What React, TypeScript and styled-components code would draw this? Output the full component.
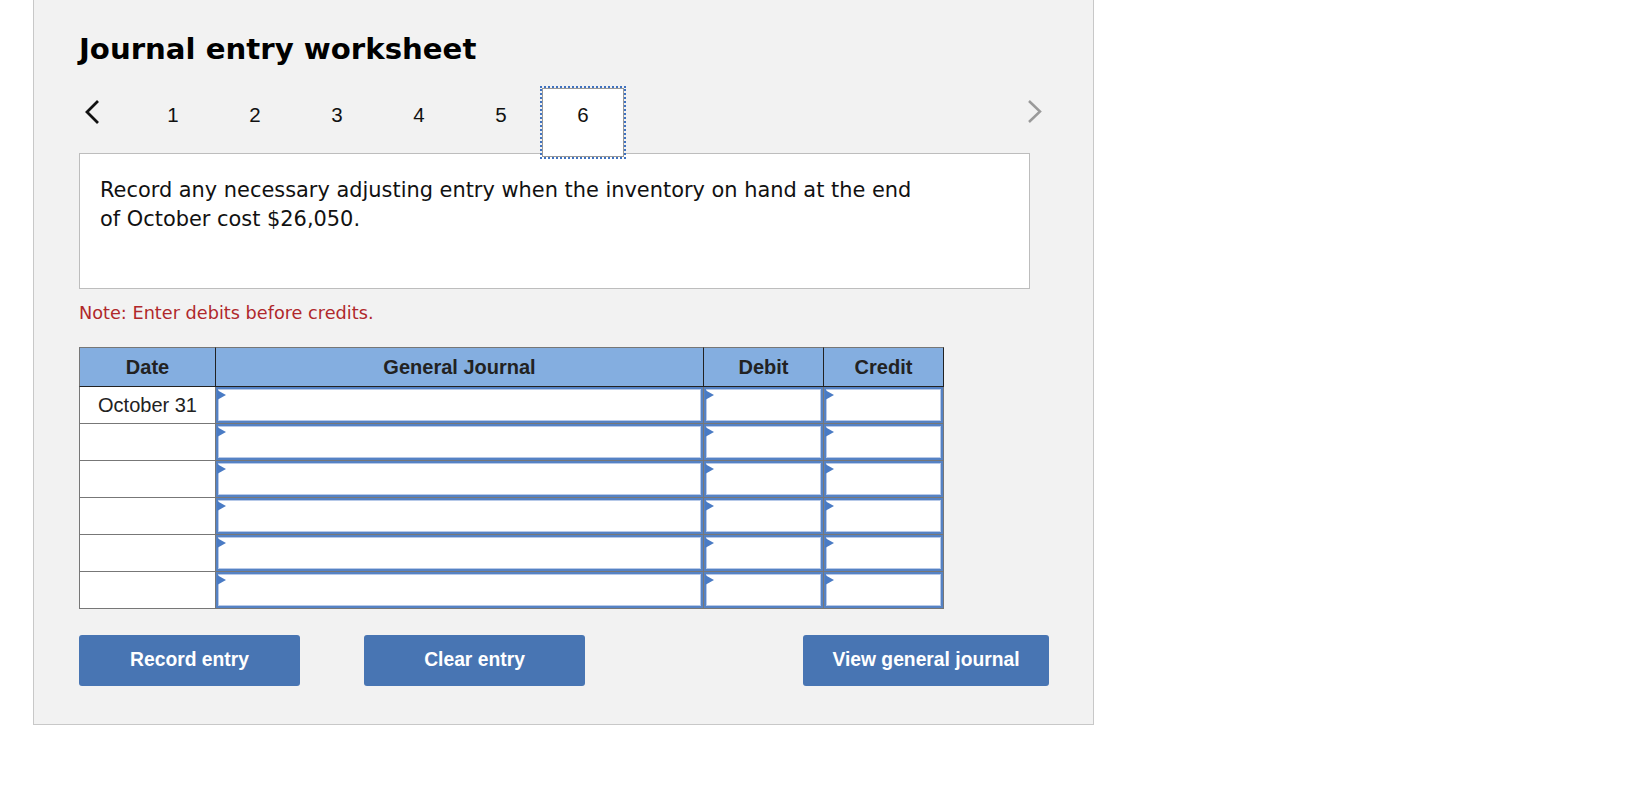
import * as React from "react";
import styled, { createGlobalStyle } from "styled-components";

const GlobalStyle = createGlobalStyle`
  html, body {
    margin: 0;
    padding: 0;
    background: #ffffff;
  }
`;

const TABS = [1, 2, 3, 4, 5, 6];
const ACTIVE_TAB = 6;
const ROWS = ["October 31", "", "", "", "", ""];

function Chevron({ dir }: { dir: "prev" | "next" }) {
  return (
    <svg width="16" height="26" viewBox="0 0 16 26" aria-hidden="true">
      {dir === "prev" ? (
        <polyline points="14,2 3,13 14,24" fill="none" stroke="#111" strokeWidth="2.8" />
      ) : (
        <polyline points="2,2 13,12.5 2,23" fill="none" stroke="#9a9a9a" strokeWidth="2.5" />
      )}
    </svg>
  );
}

export default function App() {
  return (
    <>
      <GlobalStyle />
      <Panel>
        <Title>Journal entry worksheet</Title>

        <NavRow>
          <NavArrow type="button" aria-label="Previous">
            <Chevron dir="prev" />
          </NavArrow>
          {TABS.map((n) => (
            <Tab key={n} $active={n === ACTIVE_TAB}>
              {n}
            </Tab>
          ))}
          <NextArrow type="button" aria-label="Next">
            <Chevron dir="next" />
          </NextArrow>
        </NavRow>

        <Prompt>
          <PromptText>
            Record any necessary adjusting entry when the inventory on hand at the end of
            October cost $26,050.
          </PromptText>
        </Prompt>

        <Note>Note: Enter debits before credits.</Note>

        <Journal>
          <HeadCell $first>Date</HeadCell>
          <HeadCell>General Journal</HeadCell>
          <HeadCell>Debit</HeadCell>
          <HeadCell>Credit</HeadCell>
          {ROWS.map((date, i) => (
            <React.Fragment key={i}>
              <DateCell>{date}</DateCell>
              <EntryCell>
                <EntryInput />
              </EntryCell>
              <EntryCell>
                <EntryInput />
              </EntryCell>
              <EntryCell>
                <EntryInput />
              </EntryCell>
            </React.Fragment>
          ))}
        </Journal>

        <ButtonRow>
          <ButtonGroup>
            <ActionButton $width={221}>Record entry</ActionButton>
            <ActionButton $width={221}>Clear entry</ActionButton>
          </ButtonGroup>
          <ActionButton $width={246}>View general journal</ActionButton>
        </ButtonRow>
      </Panel>
    </>
  );
}

const Panel = styled.div`
  box-sizing: border-box;
  margin-left: 33px;
  width: 1061px;
  padding: 31px 0 38px 45px;
  background: #f2f2f2;
  border: 1px solid #c8c8c8;
  border-top: none;
`;

const Title = styled.h1`
  margin: 0;
  font-family: "DejaVu Sans", Verdana, sans-serif;
  font-weight: bold;
  font-size: 29.2px;
  line-height: 36px;
  color: #000;
`;

const NavRow = styled.div`
  display: flex;
  align-items: flex-start;
  height: 65px;
  margin-top: 21px;
  width: 964px;
`;

const NavArrow = styled.button`
  display: flex;
  width: 48px;
  margin: 11px 0 0 5px;
  padding: 0;
  border: 0;
  background: transparent;
  cursor: pointer;
`;

const NextArrow = styled(NavArrow)`
  width: auto;
  margin-left: auto;
`;

const Tab = styled.div<{ $active?: boolean }>`
  position: relative;
  z-index: 1;
  box-sizing: border-box;
  width: 82px;
  height: 69px;
  padding-top: 14px;
  text-align: center;
  font-family: "Liberation Sans", Arial, sans-serif;
  font-size: 20.5px;
  line-height: 24px;
  color: #111;
  border: 1px solid ${(p) => (p.$active ? "#9a9a9a" : "transparent")};
  background: ${(p) => (p.$active ? "#ffffff" : "transparent")};
  outline: ${(p) => (p.$active ? "2px dotted #3f72c0" : "none")};
  outline-offset: 0;
`;

const Prompt = styled.div`
  box-sizing: border-box;
  width: 951px;
  height: 136px;
  padding: 22px 20px;
  background: #ffffff;
  border: 1px solid #bdbdbd;
`;

const PromptText = styled.p`
  margin: 0;
  width: 830px;
  font-family: "DejaVu Sans", Verdana, sans-serif;
  font-size: 20.9px;
  line-height: 29px;
  color: #111;
`;

const Note = styled.p`
  margin: 14px 0 0;
  font-family: "DejaVu Sans", Verdana, sans-serif;
  font-size: 17.7px;
  color: #b0282b;
`;

const Journal = styled.div`
  display: grid;
  grid-template-columns: 137px 488px 120px 120px;
  grid-template-rows: 40px repeat(6, 37px);
  margin-top: 24px;
  width: 865px;
  font-family: "Liberation Sans", Arial, sans-serif;
  font-size: 20px;
  color: #222;
`;

const HeadCell = styled.div<{ $first?: boolean }>`
  box-sizing: border-box;
  display: flex;
  align-items: center;
  justify-content: center;
  font-weight: bold;
  background: #84aee0;
  border-top: 1px solid #777;
  border-left: ${(p) => (p.$first ? "1px solid #777" : "none")};
  border-right: 1px solid #222;
  border-bottom: 1px solid #222;
`;

const DateCell = styled.div`
  box-sizing: border-box;
  display: flex;
  align-items: center;
  justify-content: center;
  background: #ffffff;
  border-left: 1px solid #777;
  border-right: 1px solid #777;
  border-bottom: 1px solid #777;
`;

const EntryCell = styled.div`
  position: relative;
  box-sizing: border-box;
  display: flex;
  border-right: 1px solid #777;
  border-bottom: 1px solid #777;

  &::before {
    content: "";
    position: absolute;
    z-index: 1;
    top: 3px;
    left: 1px;
    width: 0;
    height: 0;
    border-left: 9px solid #4a7bc4;
    border-top: 5px solid transparent;
    border-bottom: 5px solid transparent;
  }
`;

const EntryInput = styled.div`
  flex: 1;
  background: #ffffff;
  border: 2px solid #5582c4;
  box-shadow: inset 0 0 0 1px #b7c9e8;
`;

const ButtonRow = styled.div`
  display: flex;
  justify-content: space-between;
  width: 970px;
  margin-top: 26px;
`;

const ButtonGroup = styled.div`
  display: flex;
  gap: 64px;
`;

const ActionButton = styled.button<{ $width: number }>`
  box-sizing: border-box;
  width: ${(p) => p.$width}px;
  height: 51px;
  padding: 0 0 2px;
  border: 0;
  border-radius: 3px;
  background: #4875b3;
  color: #ffffff;
  font-family: "Liberation Sans", Arial, sans-serif;
  font-weight: bold;
  font-size: 19.3px;
  cursor: pointer;
`;
